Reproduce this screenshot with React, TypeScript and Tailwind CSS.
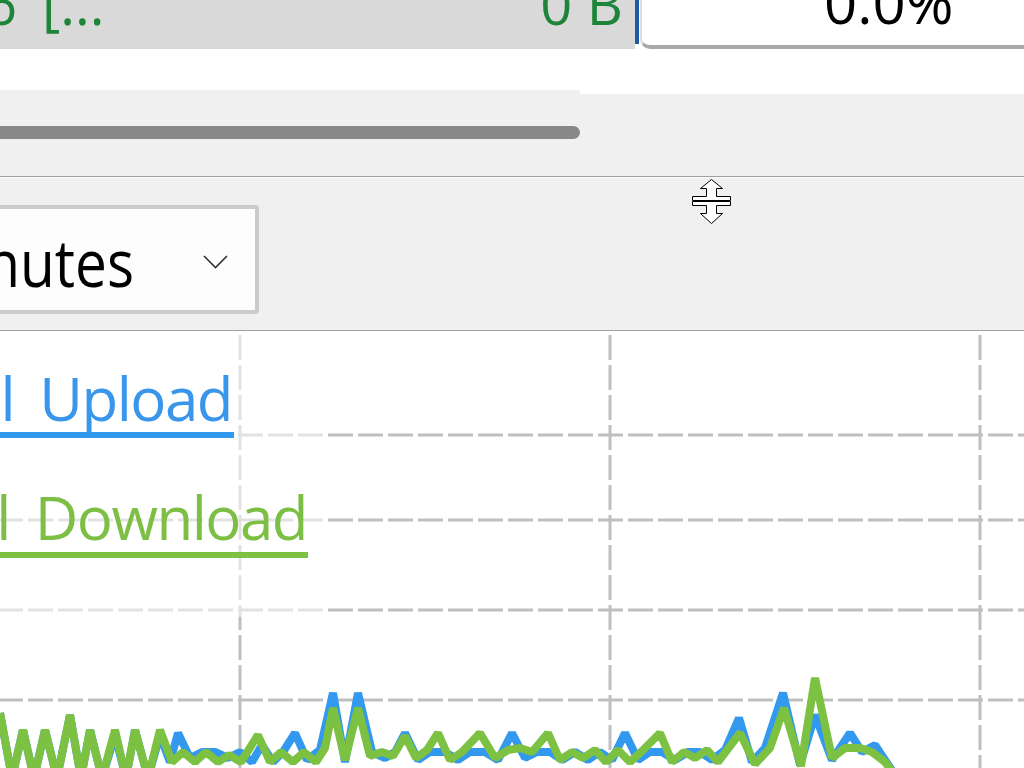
import React from "react";

const greenPts =
  "0,713 12,778 23,730 34,778 45,730 57,778 70,715 81,778 90,730 102,778 115,730 126,778 135,730 148,778 160,730 172,762 183,752 195,762 206,752 218,762 229,755 241,762 258,735 270,762 281,752 293,762 304,752 316,762 325,748 333,708 345,760 358,708 370,756 382,752 393,756 405,736 416,758 427,750 438,733 450,760 462,752 480,733 495,758 508,750 520,748 532,752 548,733 560,760 572,752 583,758 595,750 606,762 618,750 630,762 641,752 660,733 672,762 684,752 695,758 707,750 718,762 740,733 755,764 770,748 784,708 801,766 815,678 832,758 845,748 860,748 872,752 885,762 897,778";

const bluePts =
  "0,713 12,778 23,730 34,778 45,730 57,778 70,715 81,778 90,730 102,778 115,735 126,778 135,730 148,778 160,735 170,762 178,733 190,758 202,752 215,752 228,758 240,752 252,762 262,745 273,762 283,752 295,733 307,760 320,750 333,693 345,762 358,693 372,752 385,758 395,752 405,733 418,760 430,752 445,752 458,760 470,752 485,752 498,760 512,733 525,758 537,752 550,752 562,760 575,752 588,760 600,752 612,760 625,733 638,760 650,752 662,752 675,760 688,752 700,752 712,760 725,750 739,718 752,762 765,748 783,693 800,765 815,715 832,760 850,733 862,752 875,745 885,760 897,778";

export default function App() {
  return (
    <div className="w-[1024px] h-[768px] overflow-hidden bg-white font-['Open_Sans',sans-serif]">
      {/* Row 1 */}
      <div className="flex h-[49px]">
        <div className="w-[635px] bg-[#d9d9d9] flex justify-between items-start overflow-hidden text-[56px] leading-none text-[#1d8439] whitespace-nowrap">
          <div className="flex gap-[25px] mt-[-25px]">
            <span className="ml-[-15px]">6</span>
            <span>[...</span>
          </div>
          <span className="mt-[-25px] mr-[12px]">0 B</span>
        </div>
        <div className="w-[4px] h-[44px] bg-[#1f5aa6]" />
        <div className="flex-1 ml-[1px] bg-white border-b-[4px] border-l-[2px] border-[#a9a9a9] border-l-[#dcdcdc] rounded-bl-[10px] overflow-hidden text-[58px] leading-none text-black whitespace-nowrap">
          <span className="block mt-[-27px] pl-[182px]">0.0%</span>
        </div>
      </div>

      {/* Row 2 */}
      <div className="h-[41px] bg-white" />

      {/* Row 3: horizontal scrollbar */}
      <div className="flex h-[86px]">
        <div className="w-[580px] bg-[#f0f0f0] pt-[36px]">
          <div className="h-[13px] bg-[#888888] rounded-r-full" />
        </div>
        <div className="flex-1 bg-[#f0f0f0] border-t-[4px] border-white" />
      </div>
      <div className="h-px bg-[#a0a0a0]" />
      <div className="h-px bg-[#fbfbfb]" />

      {/* Row 4: toolbar with combobox */}
      <div className="relative h-[152px] bg-[#f0f0f0] pt-[27px]">
        <div className="w-[259px] h-[109px] bg-[#fdfdfd] border-[4px] border-l-0 border-[#cbcbcb] rounded-r-[4px] flex items-start">
          <div className="w-[134px] shrink-0 flex justify-end mt-[19px]">
            <span className="text-[66px] leading-none text-black whitespace-nowrap origin-right scale-x-[0.86]">
              Minutes
            </span>
          </div>
          <svg className="ml-[69px] mt-[46px] shrink-0" width="25" height="14" viewBox="0 0 25 14">
            <polyline points="1,1 12.5,12.5 24,1" fill="none" stroke="#333333" strokeWidth="1.6" />
          </svg>
        </div>
        {/* resize cursor */}
        <svg className="absolute left-[688px] top-[-1px]" width="46" height="50" viewBox="0 0 46 50">
          <polygon
            points="23.5,2.5 34.5,11.5 28.5,11.5 28.5,19.5 42.5,19.5 42.5,23.5 4.5,23.5 4.5,19.5 18.5,19.5 18.5,11.5 12.5,11.5"
            fill="white"
            stroke="black"
            strokeWidth="1"
            strokeLinejoin="round"
          />
          <polygon
            points="4.5,24.5 42.5,24.5 42.5,28.5 28.5,28.5 28.5,36.5 34.5,36.5 23.5,46.5 12.5,36.5 18.5,36.5 18.5,28.5 4.5,28.5"
            fill="white"
            stroke="black"
            strokeWidth="1"
            strokeLinejoin="round"
          />
        </svg>
      </div>
      <div className="h-px bg-[#a0a0a0]" />

      {/* Chart */}
      <div className="relative h-[437px] bg-white overflow-hidden">
        <svg className="absolute left-0 top-0" width="1024" height="437" viewBox="0 331 1024 437">
          <g stroke="#bfbfbf" strokeWidth="3" strokeDasharray="25 5" fill="none">
            <line x1="-2" y1="435" x2="1024" y2="435" />
            <line x1="-2" y1="520" x2="1024" y2="520" />
            <line x1="-2" y1="610" x2="1024" y2="610" />
            <line x1="-2" y1="700" x2="1024" y2="700" />
            <line x1="240" y1="335" x2="240" y2="768" />
            <line x1="610" y1="335" x2="610" y2="768" />
            <line x1="980" y1="335" x2="980" y2="768" />
          </g>
          <rect x="0" y="331" width="323" height="286" fill="white" fillOpacity="0.55" />
          <polyline points={bluePts} fill="none" stroke="#3399ee" strokeWidth="8" strokeLinejoin="bevel" />
          <polyline points={greenPts} fill="none" stroke="#7cc142" strokeWidth="8" strokeLinejoin="bevel" />
        </svg>

        {/* Legend */}
        <div className="absolute left-0 top-[37px] w-[232px] flex justify-end gap-[25px] text-[60px] leading-none tracking-[-1.5px] text-[#3a96ea] whitespace-nowrap">
          <span>Total</span>
          <span>Upload</span>
        </div>
        <div className="absolute left-0 top-[101px] w-[234px] h-[6px] bg-[#3399ee]" />
        <div className="absolute left-0 top-[156px] w-[307px] flex justify-end gap-[25px] text-[60px] leading-none tracking-[-1.5px] text-[#7cbf44] whitespace-nowrap">
          <span>Total</span>
          <span>Download</span>
        </div>
        <div className="absolute left-0 top-[221px] w-[308px] h-[6px] bg-[#7cc142]" />
      </div>
    </div>
  );
}
